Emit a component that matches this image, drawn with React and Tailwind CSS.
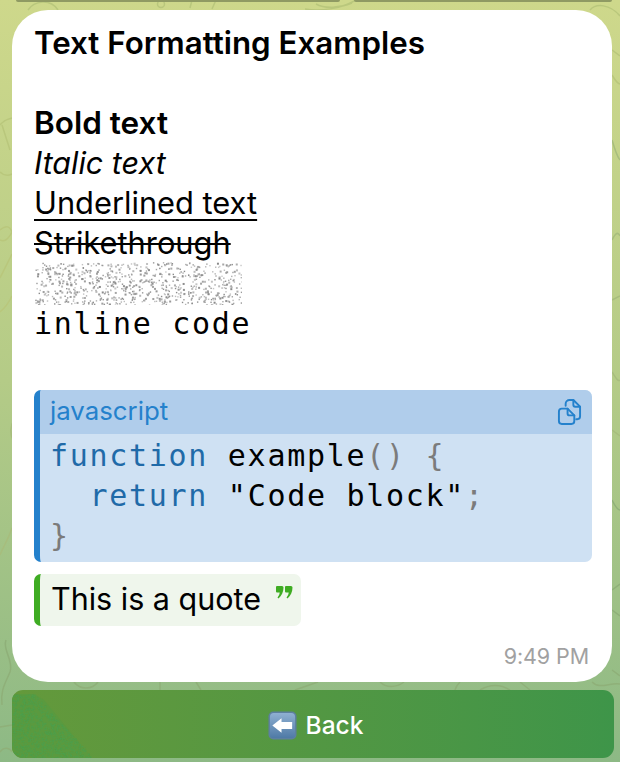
import React, { useMemo } from "react";

// small seeded generator so the noise stays the same between renders
function makeDots(count, w, h, seed) {
  let s = seed;
  const next = () => {
    s = (s * 16807) % 2147483647;
    return s / 2147483647;
  };
  return Array.from({ length: count }, () => ({
    x: next() * w,
    y: next() * h,
    o: 0.45 + next() * 0.55,
    r: next() > 0.7 ? 2 : 1.4,
  }));
}

function Spoiler() {
  const dots = useMemo(() => makeDots(760, 207, 43, 4711), []);
  return (
    <svg width="207" height="43" className="block" aria-hidden="true">
      {dots.map((d, i) => (
        <rect key={i} x={d.x} y={d.y} width={d.r} height={d.r} fill="#8a8a8a" opacity={d.o} />
      ))}
    </svg>
  );
}

function Ripple() {
  const dots = useMemo(() => makeDots(1500, 80, 64, 913), []);
  return (
    <svg width="80" height="64" className="absolute left-0 bottom-0" aria-hidden="true">
      <polygon points="0,0 22,0 32,6 80,64 0,64" fill="#5a9a3f" />
      {dots
        .filter((d) => d.x < 22 + d.y * 0.93)
        .map((d, i) => (
          <rect key={i} x={d.x} y={d.y} width="1.3" height="1.3" fill="#4d9f4c" opacity={d.o} />
        ))}
    </svg>
  );
}

function Doodles() {
  return (
    <svg
      width="620"
      height="762"
      className="absolute inset-0"
      fill="none"
      strokeWidth="1.5"
      aria-hidden="true"
    >
      <g stroke="#b9c77c">
        <path d="M28 10 C34 1 50 -2 58 10" />
        <circle cx="161" cy="4" r="3.5" />
        <path d="M192 0 L190 8 M216 0 L212 9" />
        <path d="M316 4 C325 9 340 8 352 3 M305 9 C322 12 342 8 356 0" />
        <path d="M590 10 C596 3 610 4 620 16 M612 50 L620 56 M612 75 C615 80 618 84 620 84" />
        <path d="M0 125 C6 118 8 120 12 118 M2 125 L10 150 M0 172 C4 176 8 176 12 174" />
        <path d="M0 230 C6 225 10 226 12 232 C8 240 4 242 0 240 M0 278 L12 254 M0 312 C5 308 9 302 12 296" />
      </g>
      <g stroke="#a7bd7d">
        <path d="M612 140 C615 150 618 158 620 160 M612 240 C616 232 618 232 620 236 M612 300 L620 296" />
        <path d="M612 372 C616 378 618 382 620 380 M612 430 L620 436 M14 420 C10 426 10 434 13 440" />
        <path d="M0 555 C4 545 8 540 12 528" />
      </g>
      <g stroke="#8fb079">
        <path d="M612 500 C615 506 618 510 620 510 M612 590 L620 584 M612 610 L620 616" />
        <path d="M6 640 C2 650 14 660 10 672 C6 682 0 690 2 705" />
        <path d="M0 727 L12 725 M0 752 C4 746 10 748 12 752" />
        <path d="M74 682 C80 690 92 690 98 682 M160 682 L160 690 M196 682 L201 690" />
        <path d="M295 690 L318 682 M380 682 C386 688 396 688 404 682 M455 690 C456 686 458 684 460 682" />
        <path d="M480 690 C490 684 500 684 510 690 M520 682 L530 690" />
        <path d="M612 670 L620 676 M592 682 C600 690 610 682 620 684" />
      </g>
    </svg>
  );
}

function CopyIcon() {
  return (
    <svg width="25" height="27" viewBox="0 0 26 28" fill="none" stroke="#2481cc" strokeWidth="2" strokeLinejoin="round" strokeLinecap="round" aria-hidden="true">
      <path d="M2 14 a3 3 0 0 1 3 -3 h6 l7 7 v6 a3 3 0 0 1 -3 3 h-10 a3 3 0 0 1 -3 -3 z" />
      <path d="M11 11 v5 a2 2 0 0 0 2 2 h5" />
      <path d="M9 8 v-2 a4 4 0 0 1 4 -4 h4 l7 7 v10 a3 3 0 0 1 -3 3 h-1" />
      <path d="M17 2 v5 a2 2 0 0 0 2 2 h5" />
    </svg>
  );
}

function QuoteMark() {
  return (
    <svg width="17" height="13" viewBox="0 0 17 13" fill="#3fac23" aria-hidden="true">
      <path d="M1 0 h5 a1.5 1.5 0 0 1 1.5 1.5 c0 4.5 -2 8.5 -5 11 l-1 -1 c1.2 -1.5 2 -3 2.2 -5 h-2.7 a1 1 0 0 1 -1 -1 v-4.5 a1 1 0 0 1 1 -1 z" />
      <path d="M10 0 h5 a1.5 1.5 0 0 1 1.5 1.5 c0 4.5 -2 8.5 -5 11 l-1 -1 c1.2 -1.5 2 -3 2.2 -5 h-2.7 a1 1 0 0 1 -1 -1 v-4.5 a1 1 0 0 1 1 -1 z" />
    </svg>
  );
}

function BackEmoji() {
  return (
    <svg width="29" height="29" viewBox="0 0 30 30" aria-hidden="true">
      <defs>
        <linearGradient id="emojiBox" x1="0" y1="0" x2="0" y2="1">
          <stop offset="0" stopColor="#8fb0d2" />
          <stop offset="1" stopColor="#4f7aa6" />
        </linearGradient>
      </defs>
      <rect x="0.5" y="0.5" width="29" height="29" rx="5" fill="#5d7f9f" />
      <rect x="2" y="2" width="26" height="26" rx="4" fill="url(#emojiBox)" />
      <path d="M4.5 15 L14 7.5 V11.5 H25 V18.5 H14 V22.5 Z" fill="#ffffff" />
    </svg>
  );
}

const mono = "font-['DejaVu_Sans_Mono',monospace] tracking-[1.7px]";

export default function App() {
  return (
    <div className="relative w-[620px] h-[762px] overflow-hidden bg-gradient-to-b from-[#ced88b] via-[#b4cb87] to-[#8db985] font-['Inter',sans-serif] text-black">
      <Doodles />
      <div className="relative flex flex-col h-full">
        {/* Edges of the buttons above */}
        <div className="pl-[16px] pr-[8px] h-[2px] shrink-0 flex gap-[14px]">
          <div className="w-[324px] rounded-b bg-[#8f9a63]" />
          <div className="flex-1 rounded-b bg-[#8f9a63]" />
        </div>

        {/* Message bubble */}
        <div className="mt-[8px] ml-[12px] w-[600px] h-[672px] shrink-0 rounded-[36px] bg-white pl-[22px] pr-[21px] pt-[13px] flex flex-col">
          <div className="text-[31.3px] leading-[40px] font-semibold whitespace-nowrap">Text Formatting Examples</div>
          <div className="h-[40px]" />
          <div className="text-[31.5px] leading-[40px] font-semibold">Bold text</div>
          <div className="text-[30.5px] leading-[40px] italic">Italic text</div>
          <div className="text-[30.8px] leading-[40px] underline decoration-2 underline-offset-[5px]">Underlined text</div>
          <div className="text-[30.8px] leading-[40px] line-through decoration-2">Strikethrough</div>
          <div className="h-[40px] flex items-center pl-[1px]">
            <Spoiler />
          </div>
          <div className={`pt-[1px] text-[30px] leading-[40px] ${mono}`}>inline code</div>

          {/* Code block */}
          <div className="mt-[46px] w-[558px] rounded-[7px] overflow-hidden border-l-[6px] border-[#2481cc] bg-[#cfe1f3]">
            <div className="h-[44px] flex items-center justify-between pl-[10px] pr-[10px] pb-[2px] bg-[#b0cdeb]">
              <span className="text-[25.8px] text-[#2481cc]">javascript</span>
              <CopyIcon />
            </div>
            <div className={`pl-[10px] pt-[2px] pb-[6px] text-[30px] leading-[40px] whitespace-pre ${mono}`}>
              <div>
                <span className="text-[#1f6aa8]">function</span> example<span className="text-[#7b7b7b]">() {"{"}</span>
              </div>
              <div>
                {"  "}
                <span className="text-[#1f6aa8]">return</span> "Code block"<span className="text-[#7b7b7b]">;</span>
              </div>
              <div className="text-[#7b7b7b]">{"}"}</div>
            </div>
          </div>

          {/* Quote */}
          <div className="mt-[12px] self-start h-[52px] flex rounded-[7px] overflow-hidden border-l-[6px] border-[#3fac23] bg-[#eff6ec]">
            <span className="pl-[11px] text-[30.5px] leading-[50px]">This is a quote</span>
            <span className="ml-[15px] mt-[12px] mr-[8px]">
              <QuoteMark />
            </span>
          </div>

          <div className="mt-[16px] pr-[2px] text-right text-[21.5px] leading-[28px] text-[#a1a1a1] tracking-[-0.1px]">9:49 PM</div>
        </div>

        {/* Back button */}
        <div className="relative mt-[8px] ml-[12px] w-[602px] h-[68px] shrink-0 rounded-[11px] overflow-hidden bg-gradient-to-r from-[#64993b] to-[#3e9549] flex items-center justify-center gap-[9px] pt-[3px] pl-[5px]">
          <Ripple />
          <span className="relative">
            <BackEmoji />
          </span>
          <span className="relative text-[24.5px] font-medium text-white">Back</span>
        </div>
      </div>
    </div>
  );
}
